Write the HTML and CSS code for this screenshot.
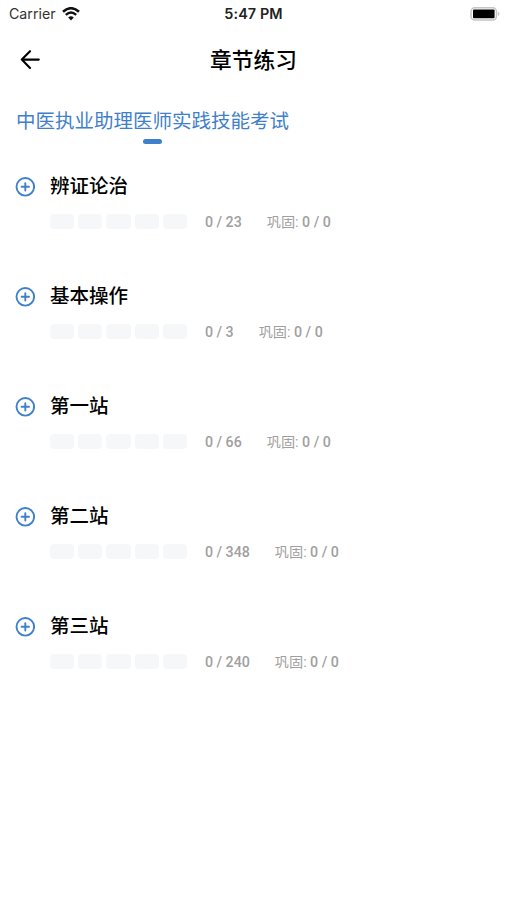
FILE: index.html
```html
<!DOCTYPE html>
<html lang="zh-CN">
<head>
    <meta charset="UTF-8">
    <meta name="viewport" content="width=device-width, initial-scale=1.0">
    <title>章节练习</title>
    <link rel="stylesheet" href="styles.css">
</head>
<body>
    <div class="status-bar">
        <div class="carrier">
            <span>Carrier</span>
            <svg class="wifi" viewBox="0 0 18 14" width="18" height="14">
                <path d="M1 4.8 Q9 -2.4 17 4.8" fill="none" stroke="#111" stroke-width="2.5"/>
                <path d="M3.8 7.9 Q9 3.1 14.2 7.9" fill="none" stroke="#111" stroke-width="2.3"/>
                <path d="M6.2 10.4 Q9 7.9 11.8 10.4 L9 13.4 Z" fill="#111"/>
            </svg>
        </div>
        <div class="time">5:47 PM</div>
        <div class="status-right">
            <svg viewBox="0 0.6 31 14" width="31" height="14">
                <rect x="1" y="1.4" width="25.5" height="12.2" rx="3.8" fill="#fff" stroke="#c4c4c4" stroke-width="1.5"/>
                <rect x="3" y="3.2" width="21.6" height="8.6" rx="1" fill="#000"/>
                <path d="M28.2 5.3 Q30.6 7.5 28.2 9.7 Z" fill="#b4b4b4"/>
            </svg>
        </div>
    </div>

    <div class="nav">
        <div class="back">
            <svg viewBox="0 0 20 20" width="20" height="20">
                <path d="M10 1.2 L1.8 9.6 L10 18 M1.8 9.6 H18.8" fill="none" stroke="#000" stroke-width="2.1" stroke-linecap="round" stroke-linejoin="round"/>
            </svg>
        </div>
        <h1>章节练习</h1>
    </div>

    <div class="tabs">
        <div class="tab active">中医执业助理医师实践技能考试</div>
    </div>

    <div class="chapters" id="chapters"></div>

    <script>
        const chapters = [
            { name: '辨证论治', total: 23 },
            { name: '基本操作', total: 3 },
            { name: '第一站', total: 66 },
            { name: '第二站', total: 348 },
            { name: '第三站', total: 240 }
        ];

        document.getElementById('chapters').innerHTML = chapters.map(item => `
            <div class="chapter">
                <svg class="plus" viewBox="0 0 20 20" width="20" height="20">
                    <circle cx="10.3" cy="9.8" r="8.8" fill="none" stroke="#3f80cb" stroke-width="1.9"/>
                    <path d="M10.3 6.1 V13.5 M6.6 9.8 H14" fill="none" stroke="#3f80cb" stroke-width="1.9" stroke-linecap="round"/>
                </svg>
                <div class="chapter-body">
                    <h2>${item.name}</h2>
                    <div class="info">
                        <div class="progress"><i></i><i></i><i></i><i></i><i></i></div>
                        <span class="count">0 / ${item.total}</span>
                        <span class="review"><span class="label">巩固:</span> 0 / 0</span>
                    </div>
                </div>
            </div>`).join('');
    </script>
</body>
</html>
```
FILE: styles.css
```css
body {
    margin: 0;
    background: #fff;
    color: #000;
    font-family: "Noto Sans CJK SC", sans-serif;
    overflow: hidden;
}
.status-bar {
    display: grid;
    grid-template-columns: 1fr auto 1fr;
    align-items: center;
    height: 26px;
    padding: 0 6px;
    font-family: Inter, sans-serif;
    line-height: 26px;
}
.carrier {
    display: flex;
    align-items: center;
    gap: 6px;
    padding-left: 3px;
    color: #333;
    font-size: 14.2px;
}
.time {
    color: #222;
    font-size: 14.4px;
    font-weight: 600;
    letter-spacing: 0.1px;
    padding-top: 1px;
}
.status-right {
    display: flex;
    justify-content: flex-end;
}
/* Title bar */
.nav {
    display: grid;
    grid-template-columns: 1fr auto 1fr;
    align-items: center;
    height: 66px;
    padding: 0 20px;
}
.back {
    display: flex;
    padding-top: 2px;
}
.nav h1 {
    margin: 0;
    font-size: 21.7px;
    font-weight: 500;
    line-height: 32px;
}
.tabs {
    display: flex;
    height: 73px;
    padding: 0 16px;
}
.tab {
    display: flex;
    flex-direction: column;
    align-items: center;
    padding-top: 13px;
    font-size: 19.5px;
    line-height: 30px;
}
.tab.active {
    color: #3f80cb;
}
.tab.active::after {
    content: "";
    width: 19px;
    height: 5px;
    margin-top: 4px;
    border-radius: 2.5px;
    background: #3f80cb;
}
/* Chapter list */
.chapter {
    display: flex;
    gap: 15px;
    height: 110px;
    padding-left: 15px;
}
.plus {
    flex: none;
    margin-top: 12px;
}
.chapter h2 {
    margin: 5px 0 0;
    font-size: 19.5px;
    font-weight: 500;
    line-height: 30px;
}
.info {
    display: flex;
    align-items: center;
    height: 20px;
    margin-top: 11px;
    color: #a0a0a0;
    font-family: Roboto, "Noto Sans CJK SC", sans-serif;
    font-size: 14.2px;
    font-weight: 500;
    line-height: 20px;
    white-space: nowrap;
}
.progress {
    display: flex;
    gap: 4px;
    margin-right: 18px;
}
.progress i {
    width: 24.2px;
    height: 15px;
    border-radius: 4px;
    background: #f6f7f8;
}
.count {
    padding-top: 1px;
}
.review {
    margin-left: 25px;
    padding-top: 2px;
}
.label {
    font-weight: 400;
}
```
